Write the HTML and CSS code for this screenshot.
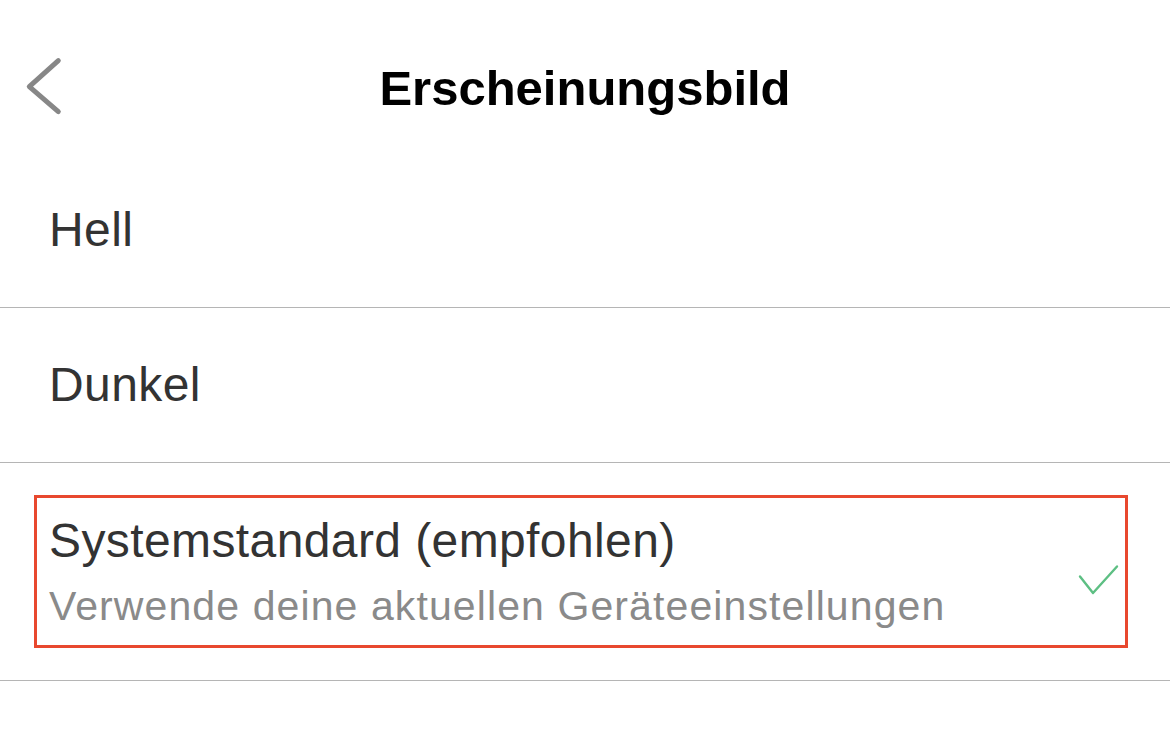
FILE: index.html
```html
<!DOCTYPE html>
<html lang="de">
<head>
    <meta charset="UTF-8">
    <meta name="viewport" content="width=device-width, initial-scale=1.0">
    <title>Erscheinungsbild</title>
    <link rel="stylesheet" href="styles.css">
</head>
<body>
    <header class="topbar">
        <button class="back" aria-label="Zurück">
            <svg width="40" height="60" viewBox="0 0 40 60">
                <path d="M34.3 4.7 L5.3 30.7 L34.3 55.7" fill="none" stroke="#878787" stroke-width="5" stroke-linecap="round" stroke-linejoin="round"/>
            </svg>
        </button>
        <h1 class="title">Erscheinungsbild</h1>
        <span></span>
    </header>

    <ul class="options">
        <li class="option">
            <span class="label">Hell</span>
        </li>
        <li class="option">
            <span class="label">Dunkel</span>
        </li>
        <li class="option option-selected">
            <div class="highlight">
                <div class="text">
                    <span class="label">Systemstandard (empfohlen)</span>
                    <span class="hint">Verwende deine aktuellen Geräteeinstellungen</span>
                </div>
                <svg class="check" width="42" height="36" viewBox="0 0 42 36">
                    <path d="M2 17.5 L15 34 L39 7.5" fill="none" stroke="#5dbf83" stroke-width="2.4" stroke-linecap="round" stroke-linejoin="round"/>
                </svg>
            </div>
        </li>
    </ul>
</body>
</html>
```

FILE: styles.css
```css
body {
    margin: 0;
    background: #fff;
    font-family: "Liberation Sans", Arial, sans-serif;
    color: #333;
}
.topbar {
    display: grid;
    grid-template-columns: 1fr auto 1fr;
    align-items: start;
    height: 153px;
    box-sizing: border-box;
    padding: 56px 24px 0;
}
.back {
    justify-self: start;
    width: 40px;
    height: 60px;
    padding: 0;
    border: 0;
    background: none;
}
.back svg {
    display: block;
}
.title {
    margin: 8px 0 0;
    font-size: 49px;
    line-height: 49px;
    font-weight: bold;
    color: #000;
}
.options {
    list-style: none;
    margin: 0;
    padding: 0;
}
.option {
    padding: 53px 49px;
    border-bottom: 1px solid #b5b5b5;
}
.label {
    display: block;
    font-size: 48px;
    line-height: 48px;
    letter-spacing: 0.4px;
    color: #333;
}
.option-selected {
    padding: 32px 42px 32px 34px;
}
.highlight {
    display: flex;
    align-items: center;
    justify-content: space-between;
    height: 153px;
    box-sizing: border-box;
    padding: 18px 5px 14px 12px;
    border: 3px solid #e8482e;
}
.text {
    display: flex;
    flex-direction: column;
    gap: 16px;
}
.hint {
    font-size: 41px;
    line-height: 50px;
    letter-spacing: 1.1px;
    color: #8a8a8a;
}
.check {
    display: block;
    margin-top: 6px;
}
```
